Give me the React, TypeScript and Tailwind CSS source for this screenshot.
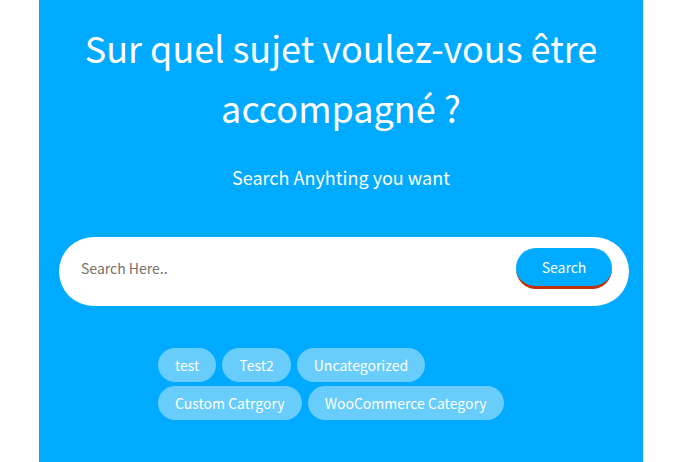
const categories = ["test", "Test2", "Uncategorized", "Custom Catrgory", "WooCommerce Category"];

export default function App() {
  return (
    <div className="min-h-screen bg-white pl-[39px] pr-[46px] font-['Noto_Sans_CJK_SC','Noto_Sans',sans-serif] text-white">
      <main className="min-h-screen bg-[#00aaff] pt-[17px] pr-[14px] pb-10 pl-5">
        <header className="pr-[6px] text-center">
          <h1 className="text-[36px] leading-[60px] font-normal">
            Sur quel sujet voulez-vous être accompagné ?
          </h1>
          <p className="mt-[26px] text-[18px] leading-7">Search Anyhting you want</p>
        </header>
        <form
          className="mt-[46px] flex h-[69px] items-start rounded-full bg-white pt-[11px] pr-[17px] pl-[22px]"
          onSubmit={(event) => event.preventDefault()}
        >
          <input
            type="text"
            aria-label="Search"
            placeholder="Search Here.."
            className="h-10 min-w-0 flex-1 bg-transparent text-[14px] text-gray-800 outline-none placeholder:text-[#757068]"
          />
          <button
            type="submit"
            className="h-[41px] w-24 rounded-[20px] border-b-3 border-[#c03204] bg-[#00aaff] text-[14px]"
          >
            Search
          </button>
        </form>
        <nav
          aria-label="Categories"
          className="mx-auto mt-[42px] flex max-w-[372px] flex-wrap gap-x-[6px] gap-y-1"
        >
          {categories.map((category) => (
            <a
              key={category}
              href="#"
              className="h-[34px] rounded-full bg-[#68cdfb] px-[17px] text-[14px] leading-[34px]"
            >
              {category}
            </a>
          ))}
        </nav>
      </main>
    </div>
  );
}
